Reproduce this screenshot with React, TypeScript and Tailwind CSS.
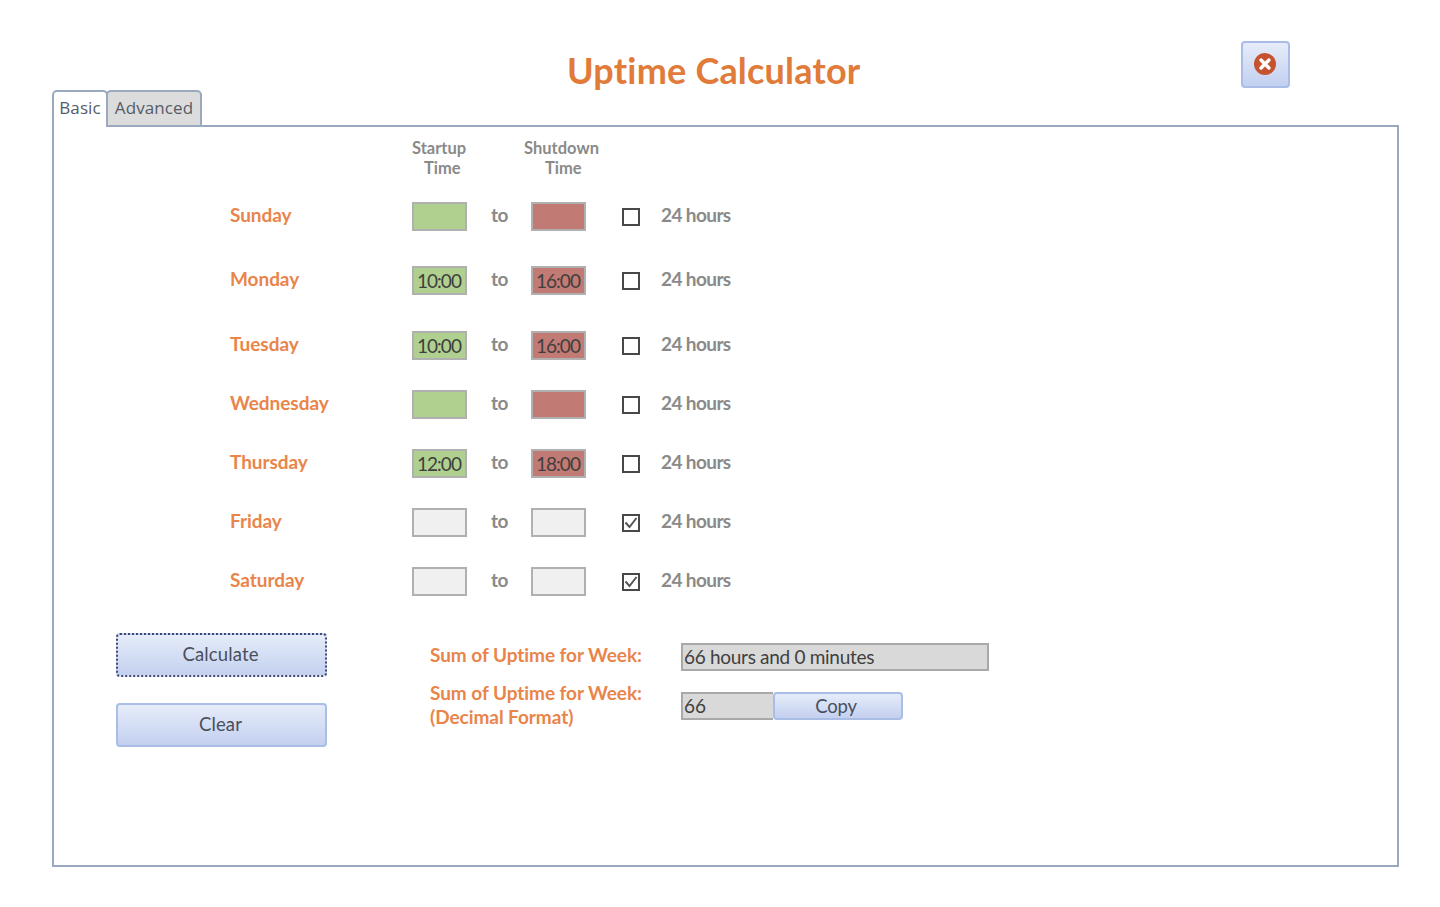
import React from 'react';

type Day = {
  name: string;
  start: string;
  end: string;
  allDay: boolean;
  rowClass: string;
};

const days: Day[] = [
  { name: 'Sunday', start: '', end: '', allDay: false, rowClass: '' },
  { name: 'Monday', start: '10:00', end: '16:00', allDay: false, rowClass: 'mt-[35px]' },
  { name: 'Tuesday', start: '10:00', end: '16:00', allDay: false, rowClass: 'mt-[36px]' },
  { name: 'Wednesday', start: '', end: '', allDay: false, rowClass: 'mt-[30px]' },
  { name: 'Thursday', start: '12:00', end: '18:00', allDay: false, rowClass: 'mt-[30px]' },
  { name: 'Friday', start: '', end: '', allDay: true, rowClass: 'mt-[30px]' },
  { name: 'Saturday', start: '', end: '', allDay: true, rowClass: 'mt-[30px]' },
];

const buttonClass =
  'flex items-center justify-center rounded-[4px] bg-gradient-to-b from-[#e6ecf9] to-[#c3d0ef] text-[#4a4f5c]';

const TimeBox = ({ value, fill, width }: { value: string; fill: string; width: string }) => (
  <div
    className={`flex h-[29px] items-center justify-center border-2 border-[#b0b0b0] pr-[1px] text-[19px] leading-none tracking-[-1px] text-[#3f3f3f] ${fill} ${width}`}
  >
    {value}
  </div>
);

const CheckBox = ({ checked }: { checked: boolean }) => (
  <div className="flex h-[18px] w-[18px] items-center justify-center border-2 border-[#484848] bg-white">
    {checked && (
      <svg width="14" height="14" viewBox="0 0 14 14" fill="none">
        <path d="M1.5 6.5 L5.5 11 L12.5 2" stroke="#555555" strokeWidth="2" />
      </svg>
    )}
  </div>
);

const DayRow = ({ day }: { day: Day }) => {
  const startFill = day.allDay ? 'bg-[#f0f0f0]' : 'bg-[#b0d08f]';
  const endFill = day.allDay ? 'bg-[#f0f0f0]' : 'bg-[#c27a74]';
  return (
    <div className={`flex h-[29px] items-center ${day.rowClass}`}>
      <div className="w-[182px] pb-[3px] text-[19px] font-bold tracking-[-0.05px] text-[#e9854a]">{day.name}</div>
      <TimeBox value={day.start} fill={startFill} width="w-[55px]" />
      <div className="w-[64px] pb-[3px] pl-[24px] text-[19px] font-bold tracking-[-0.4px] text-[#8a8a8a]">to</div>
      <TimeBox value={day.end} fill={endFill} width="w-[55px]" />
      <div className="ml-[36px]">
        <CheckBox checked={day.allDay} />
      </div>
      <div className="ml-[21px] pb-[3px] text-[19px] font-bold tracking-[-0.6px] text-[#8a8a8a]">24 hours</div>
    </div>
  );
};

export default function App() {
  return (
    <div className="h-[907px] w-[1440px] overflow-hidden bg-white pl-[52px] pr-[41px] pt-[41px] [font-family:Lato,sans-serif]">
      {/* Title row */}
      <div className="flex h-[49px] items-start">
        <h1 className="ml-[515px] mt-[7px] text-[36px] font-bold leading-[44px] tracking-[0.2px] text-[#e07b39]">
          Uptime Calculator
        </h1>
        <button className={`ml-auto mr-[109px] h-[47px] w-[49px] border-2 border-[#a9bde6] pb-[2px] pr-[2px] ${buttonClass}`}>
          <svg width="22" height="22" viewBox="0 0 22 22">
            <circle cx="11" cy="11" r="11" fill="#c5532f" />
            <path d="M7 7 L15 15 M15 7 L7 15" stroke="#ffffff" strokeWidth="3.4" strokeLinecap="round" />
          </svg>
        </button>
      </div>

      {/* Tabs */}
      <div className="relative z-10 flex h-[37px] items-end [font-family:'Open_Sans',sans-serif] text-[17px] tracking-[0.1px]">
        <div className="flex h-[37px] w-[56px] items-center justify-center rounded-t-[5px] border-2 border-b-0 border-[#9aa9c0] bg-white pb-[3px] text-[#555b66]">
          Basic
        </div>
        <div className="-ml-[2px] flex h-[37px] w-[96px] items-center justify-center rounded-t-[5px] border-2 border-[#9aa9c0] bg-[#dcdcdc] pb-[1px] text-[#555b66]">
          Advanced
        </div>
      </div>

      {/* Panel */}
      <div className="-mt-[2px] h-[742px] w-[1347px] border-2 border-[#9aa9c0] bg-white pt-[11px]">
        <div className="flex pl-[358px] text-[16.5px] font-bold leading-[20px] tracking-[0px] text-[#8a8a8a]">
          <div className="w-[94px]">
            <div>Startup</div>
            <div className="pl-[12px]">Time</div>
          </div>
          <div className="ml-[18px]">
            <div>Shutdown</div>
            <div className="pl-[21px]">Time</div>
          </div>
        </div>

        <div className="mt-[24px] pl-[176px]">
          {days.map((day) => (
            <DayRow key={day.name} day={day} />
          ))}
        </div>

        <div className="mt-[37px] flex pl-[62px]">
          <div className="w-[314px]">
            <button className={`h-[44px] w-[211px] border-2 border-dotted border-[#3f4a78] pr-[2px] text-[18.5px] tracking-[0.15px] ${buttonClass}`}>
              Calculate
            </button>
            <button className={`mt-[26px] h-[44px] w-[211px] border-2 border-[#a9bde6] pr-[2px] text-[18.5px] tracking-[0.15px] ${buttonClass}`}>
              Clear
            </button>
          </div>
          <div className="pt-[10px] text-[19px] font-bold leading-[24px] tracking-[-0.05px] text-[#e9854a]">
            <div className="flex h-[28px] items-center">
              <div className="w-[251px] pb-[4px]">Sum of Uptime for Week:</div>
              <div className="flex h-[28px] w-[308px] items-center border-2 border-[#a9a9a9] bg-[#d9d9d9] pl-[1px] text-[19px] font-normal tracking-[-0.3px] text-[#3f3f3f]">
                66 hours and 0 minutes
              </div>
            </div>
            <div className="mt-[21px] flex items-start">
              <div className="-mt-[11px] w-[251px] leading-[24px]">
                <div>Sum of Uptime for Week:</div>
                <div>(Decimal Format)</div>
              </div>
              <div className="flex h-[28px] w-[92px] items-center border-2 border-r-0 border-[#a9a9a9] bg-[#d9d9d9] pl-[1px] text-[19px] font-normal text-[#3f3f3f]">
                66
              </div>
              <button className={`h-[28px] w-[130px] border-2 border-[#a9bde6] pr-[4px] text-[18.5px] font-normal tracking-[-0.2px] ${buttonClass}`}>
                Copy
              </button>
            </div>
          </div>
        </div>
      </div>
    </div>
  );
}
